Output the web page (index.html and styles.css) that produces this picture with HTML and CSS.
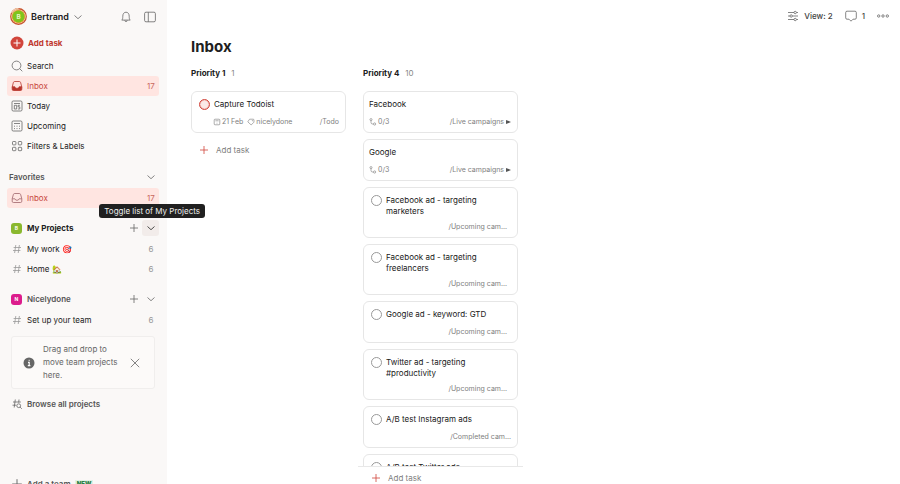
FILE: index.html
```html
<!DOCTYPE html>
<html lang="en">
<head>
<meta charset="utf-8">
<title>Inbox</title>
<link rel="stylesheet" href="styles.css">
</head>
<body>
<svg class="defs" width="0" height="0">
  <symbol id="chevron" viewBox="0 0 10 10"><path d="M1.5 3.5 5 6.7 8.5 3.5"/></symbol>
  <symbol id="plus" viewBox="0 0 10 10"><path d="M5 1v8M1 5h8"/></symbol>
  <symbol id="hash" viewBox="0 0 10 10"><path d="M3.8 1 2.6 9M7.4 1 6.2 9M1.6 3.5h7.4M1 6.5h7.4"/></symbol>
  <symbol id="subtasks" viewBox="0 0 10 10"><circle cx="2.5" cy="2" r="1.3"/><path d="M2.5 3.3v2.2q0 2 2 2h1"/><circle cx="7" cy="7.5" r="1.4"/></symbol>
</svg>

<aside class="sidebar">
  <div class="user">
    <button class="account">
      <svg class="avatar" viewBox="0 0 16 16"><circle cx="8" cy="8" r="7.3" fill="none" stroke="#c8552f" stroke-width="1.2"/><path d="M8 .7A7.3 7.3 0 0 0 1.5 4.7" fill="none" stroke="#f0c9a8" stroke-width="1.2"/><circle cx="8" cy="8" r="6.4" fill="#e9a13a"/><circle cx="8" cy="8" r="5.6" fill="#7fc41c"/><text x="8" y="10" text-anchor="middle">B</text></svg>
      <span>Bertrand</span>
      <svg class="icon small"><use href="#chevron"/></svg>
    </button>
    <button aria-label="Notifications"><svg class="icon" viewBox="0 0 12 12"><path d="M1.8 9.1h8.4C9.4 8.3 9.2 7.2 9.2 5.2 9.2 2.9 8 1.2 6 1.2S2.8 2.9 2.8 5.2C2.8 7.2 2.6 8.3 1.8 9.1zM4.8 9.3c.1 1.8 2.3 1.8 2.4 0"/></svg></button>
    <button aria-label="Toggle sidebar"><svg class="icon" viewBox="0 0 12 12"><rect x=".6" y="1.2" width="10.8" height="9.6" rx="1.4"/><path d="M4.3 1.2v9.6"/></svg></button>
  </div>

  <button class="add">
    <svg class="badge" viewBox="0 0 14 14"><circle cx="7" cy="7" r="6.5" fill="#d1453b"/><path d="M7 3.5v7M3.5 7h7" stroke="#fff"/></svg>
    Add task
  </button>

  <nav>
    <a class="row" href="#"><svg class="icon" viewBox="0 0 12 12"><circle cx="5.5" cy="5.5" r="4.4"/><path d="M8.7 8.7l2.6 2.6"/></svg><span>Search</span></a>
    <a class="row current" href="#"><svg class="icon" viewBox="0 0 12 12"><path d="M1.2 7.2 2.3 2.7Q2.6 1.5 3.7 1.5h4.6Q9.4 1.5 9.7 2.7L10.8 7.2"/><path class="solid" d="M1.2 6.8h2.7c.3 2 3.9 2 4.2 0h2.7v2.4q0 1.3-1.3 1.3h-7q-1.3 0-1.3-1.3z"/></svg><span>Inbox</span><span class="count">17</span></a>
    <a class="row" href="#"><svg class="icon" viewBox="0 0 12 12"><rect x="1" y="1" width="10" height="10" rx="1.2"/><path d="M3 3.5h6M5.7 5.3H3.3v3.7h2.4V5.3M8.9 5.3H7.1v1.6h1.7v2.1H7"/></svg><span>Today</span></a>
    <a class="row" href="#"><svg class="icon" viewBox="0 0 12 12"><rect x="1" y="1" width="10" height="10" rx="1.2"/><path d="M3 3.5h6M5.5 6.2h1M8 6.2h1M3 8.6h1M5.5 8.6h1M8 8.6h1M3 6.2h1"/></svg><span>Upcoming</span></a>
    <a class="row" href="#"><svg class="icon" viewBox="0 0 12 12"><rect x="1.5" y="1.5" width="3.4" height="3.4" rx=".7"/><rect x="7.3" y="1.5" width="3.4" height="3.4" rx=".7"/><rect x="1.5" y="7.3" width="3.4" height="3.4" rx=".7"/><rect x="7.3" y="7.3" width="3.4" height="3.4" rx=".7"/></svg><span>Filters &amp; Labels</span></a>
  </nav>

  <section class="group">
    <div class="row heading favorites">
      <span>Favorites</span>
      <button class="toggle" aria-label="Toggle favorites"><svg class="icon small"><use href="#chevron"/></svg></button>
    </div>
    <a class="row current" href="#"><svg class="icon outline" viewBox="0 0 12 12"><path d="M1.2 6.8 2.3 2.7Q2.6 1.5 3.7 1.5h4.6Q9.4 1.5 9.7 2.7L10.8 6.8v2.4q0 1.3-1.3 1.3h-7q-1.3 0-1.3-1.3zM1.2 6.8h2.7c.3 2 3.9 2 4.2 0h2.7"/></svg><span>Inbox</span><span class="count">17</span></a>
  </section>

  <section class="group">
    <div class="row heading projects">
      <span class="logo green">B</span>
      <span>My Projects</span>
      <button class="toggle" aria-label="Add project"><svg class="icon small"><use href="#plus"/></svg></button>
      <button class="toggle hover" aria-describedby="tip"><svg class="icon small"><use href="#chevron"/></svg></button>
      <span class="tooltip" id="tip" role="tooltip">Toggle list of My Projects</span>
    </div>
    <a class="row" href="#"><svg class="icon hash"><use href="#hash"/></svg><span>My work 🎯</span><span class="count">6</span></a>
    <a class="row" href="#"><svg class="icon hash"><use href="#hash"/></svg><span>Home 🏡</span><span class="count">6</span></a>
  </section>

  <section class="group">
    <div class="row heading">
      <span class="logo pink">N</span>
      <span>Nicelydone</span>
      <button class="toggle" aria-label="Add team project"><svg class="icon small"><use href="#plus"/></svg></button>
      <button class="toggle" aria-label="Toggle Nicelydone"><svg class="icon small"><use href="#chevron"/></svg></button>
    </div>
    <a class="row" href="#"><svg class="icon hash"><use href="#hash"/></svg><span>Set up your team</span><span class="count">6</span></a>
    <div class="hint">
      <svg class="icon" viewBox="0 0 12 12"><circle cx="6" cy="6" r="5.5" fill="#666" stroke="none"/><path d="M5 5.3h1.2v3M4.8 8.6h2.6M5.7 3.3h.9" stroke="#fff" stroke-width="1.2"/></svg>
      <p>Drag and drop to move team projects here.</p>
      <button aria-label="Dismiss"><svg class="icon small" viewBox="0 0 10 10"><path d="M.8.8l8.4 8.4M9.2.8.8 9.2"/></svg></button>
    </div>
    <a class="row browse" href="#"><svg class="icon" viewBox="0 0 12 12"><path d="M4.3 1.5 3.2 9.5M8 1.5 7.7 4.5M2 4h7.8M1.5 7.2h3.7"/><circle cx="7.7" cy="7.7" r="1.9"/><path d="M9.1 9.1l1.7 1.7"/></svg><span>Browse all projects</span></a>
  </section>

  <a class="row team" href="#"><svg class="icon"><use href="#plus"/></svg><span>Add a team</span><b>NEW</b></a>
</aside>

<main>
  <header>
    <button><svg class="icon" viewBox="0 0 12 12"><path d="M1 2.5h6M9.5 2.5h1.5M1 6h2M5.5 6h5.5M1 9.5h6M9.5 9.5h1.5"/><circle cx="8.2" cy="2.5" r="1.2"/><circle cx="4.2" cy="6" r="1.2"/><circle cx="8.2" cy="9.5" r="1.2"/></svg>View: 2</button>
    <button><svg class="icon" viewBox="0 0 12 12"><path d="M2 1.2h8q1.3 0 1.3 1.3v5.4q0 1.3-1.3 1.3H8L6 11.2 4 9.2H2Q.7 9.2.7 7.9V2.5Q.7 1.2 2 1.2z"/></svg>1</button>
    <button aria-label="More"><svg class="icon" viewBox="0 0 12 12"><circle cx="1.7" cy="6" r="1.2"/><circle cx="6" cy="6" r="1.2"/><circle cx="10.3" cy="6" r="1.2"/></svg></button>
  </header>
  <h1>Inbox</h1>
  <div class="board">
    <section class="column">
      <h2>Priority 1 <small>1</small></h2>
      <div class="cards">
        <article class="card">
          <div class="task"><input type="checkbox" class="p1" id="t1"><label for="t1">Capture Todoist</label></div>
          <div class="meta indent">
            <svg class="icon" viewBox="0 0 10 10"><rect x="1.5" y="1.5" width="7" height="7" rx="1"/><path d="M3 3.5h4M4.5 6.5h1"/></svg>21 Feb
            <svg class="icon tag" viewBox="0 0 10 10"><path d="M3.2 1.5h4.5q1 0 1 1v2.7L5.2 8.7 1 4.8z"/><circle cx="6.7" cy="3.5" r=".3"/></svg>nicelydone
            <a href="#">/Todo</a>
          </div>
        </article>
      </div>
      <button class="new"><svg class="icon small"><use href="#plus"/></svg>Add task</button>
    </section>

    <section class="column">
      <h2>Priority 4 <small>10</small></h2>
      <div class="cards">
        <article class="card">
          <div class="task">Facebook</div>
          <div class="meta"><svg class="icon"><use href="#subtasks"/></svg>0/3<a href="#">/Live campaigns <i class="play"></i></a></div>
        </article>
        <article class="card">
          <div class="task">Google</div>
          <div class="meta"><svg class="icon"><use href="#subtasks"/></svg>0/3<a href="#">/Live campaigns <i class="play"></i></a></div>
        </article>
        <article class="card">
          <div class="task"><input type="checkbox" id="t2"><label for="t2">Facebook ad - targeting marketers</label></div>
          <div class="meta cut"><a href="#">/Upcoming cam...</a></div>
        </article>
        <article class="card">
          <div class="task"><input type="checkbox" id="t3"><label for="t3">Facebook ad - targeting freelancers</label></div>
          <div class="meta cut"><a href="#">/Upcoming cam...</a></div>
        </article>
        <article class="card">
          <div class="task"><input type="checkbox" id="t4"><label for="t4">Google ad - keyword: GTD</label></div>
          <div class="meta cut"><a href="#">/Upcoming cam...</a></div>
        </article>
        <article class="card">
          <div class="task"><input type="checkbox" id="t5"><label for="t5">Twitter ad - targeting #productivity</label></div>
          <div class="meta cut"><a href="#">/Upcoming cam...</a></div>
        </article>
        <article class="card">
          <div class="task"><input type="checkbox" id="t6"><label for="t6">A/B test Instagram ads</label></div>
          <div class="meta"><a href="#">/Completed cam...</a></div>
        </article>
        <article class="card">
          <div class="task"><input type="checkbox" id="t7"><label for="t7">A/B test Twitter ads</label></div>
          <div class="meta cut"><a href="#">/Upcoming cam...</a></div>
        </article>
      </div>
      <button class="new pinned"><svg class="icon small"><use href="#plus"/></svg>Add task</button>
    </section>
  </div>
</main>
</body>
</html>
```

FILE: styles.css
```css
* {box-sizing:border-box;}
body {margin:0; display:flex; height:100vh; overflow:hidden; background:#fff; color:#202020; font:8px/12px Inter, "Liberation Sans", sans-serif;}
h1, h2, p {margin:0;}
a {color:inherit; text-decoration:none;}
button {display:flex; align-items:center; padding:0; border:0; background:none; color:inherit; font:inherit; cursor:pointer;}
.defs {position:absolute;}
.icon {flex:none; width:12px; height:12px; fill:none; stroke:#666; stroke-width:.8;}
.icon.small {width:10px; height:10px;}
.solid {fill:#b8352c;}

/* sidebar */
.sidebar {position:relative; z-index:1; flex:none; width:167px; padding:8px 8px 0 7px; background:#faf8f7;}
.user {display:flex; align-items:center; gap:12px; height:17px; padding:0 3px;}
.account {gap:4px; margin-right:auto; font-size:9px; font-weight:600;}
.avatar {width:17px; height:17px;}
.avatar text {fill:#e6f7c8; font-size:6px; font-weight:700;}
.add {gap:4px; height:20px; margin:8px 0 3px 3px; color:#c0392f; font-weight:700;}
.badge {width:14px; height:14px;}
nav {padding-bottom:1px;}
.row {display:flex; align-items:center; gap:4px; height:20px; padding:0 4px; border-radius:3px;}
.row .count {width:8px; margin-left:auto; color:#999; text-align:center;}
.row .icon.hash {stroke:#999; padding:1px;}
.current {background:#ffe5e1; color:#c8473e;}
.current .icon {stroke:#b8352c;}
.current .icon.outline {stroke:#a0656b;}
.row.current .count {color:#c8685f;}
.group {margin-top:10px;}
.heading {position:relative; gap:0; margin-bottom:1px; padding-right:0; color:#555; font-weight:600;}
.favorites {padding-left:2px;}
.projects {color:#202020; font-weight:700;}
.toggle {justify-content:center; width:17px; height:16px; border-radius:3px;}
.toggle:first-of-type {margin-left:auto;}
.toggle.hover {background:#f2ecea;}
.toggle.hover .icon {stroke:#222;}
.logo {width:11px; height:11px; margin-right:5px; border-radius:3px; color:#fff; font-size:5px; font-weight:700; line-height:11px; text-align:center;}
.green {background:#8ab82e;}
.pink {background:#dc1c8c;}
.tooltip {position:absolute; right:-46px; bottom:20px; z-index:2; padding:1px 5px; border-radius:3px; background:#202020; color:#eee; font-weight:400; white-space:nowrap;}
.hint {display:flex; align-items:center; gap:8px; margin:6px 4px 5px; padding:6px 14px 6px 11px; border:1px solid #f0eeed; border-radius:3px; background:#fcfaf9; color:#666; line-height:13px;}
.hint p {flex:1;}
.browse, .team {color:#555; font-weight:600;}
.team {margin-top:60px;}
.team b {padding:0 2px; background:#e0f2e4; color:#2c8048; font-size:6px; line-height:8px;}

/* board */
main {flex:1; display:flex; flex-direction:column; min-width:0; padding-left:24px;}
header {display:flex; justify-content:flex-end; gap:12px; height:32px; padding-right:11px; color:#444;}
header button {gap:5px; font-weight:500;}
h1 {font-size:15px; line-height:20px; margin:5px 0;}
.board {flex:1; display:flex; gap:17px; min-height:0;}
.column {display:flex; flex-direction:column; width:155px;}
h2 {margin:5px 0 11px; font-size:8px; line-height:13px; font-weight:700;}
h2 small {margin-left:4px; color:#888; font-size:8px; font-weight:400;}
.cards {display:flex; flex-direction:column; gap:6px; min-height:0; overflow:hidden;}
.card {flex:none; padding:7px 6px 4px 5px; border:1px solid #e6e6e6; border-radius:6px;}
.task {display:flex; gap:4px; min-height:13px; line-height:11px;}
input {appearance:none; flex:none; width:11px; height:11px; margin:0 0 2px 2px; border:1px solid #999; border-radius:50%;}
input.p1 {border-color:#d1453b; background:#fbe9e7; box-shadow:inset 0 0 1px #d1453b;}
.meta {display:flex; align-items:center; gap:1px; margin-top:4px; color:#808080; font-size:7px;}
.meta .icon {width:8px; height:8px; stroke:#808080;}
.meta .tag {margin-left:3px;}
.meta a {margin-left:auto;}
.indent {padding-left:16px;}
.cut {padding-right:4px;}
.play {display:inline-block; border:solid transparent; border-width:2px 0 2px 5px; border-left-color:#555;}
.new {flex:none; gap:7px; height:12px; margin:11px 0 0 8px; color:#808080;}
.new .icon {stroke:#d1453b;}
.pinned {height:18px; margin:0 -5px; padding:4px 0 0 13px; border-top:1px solid #e8e8e8;}
```
